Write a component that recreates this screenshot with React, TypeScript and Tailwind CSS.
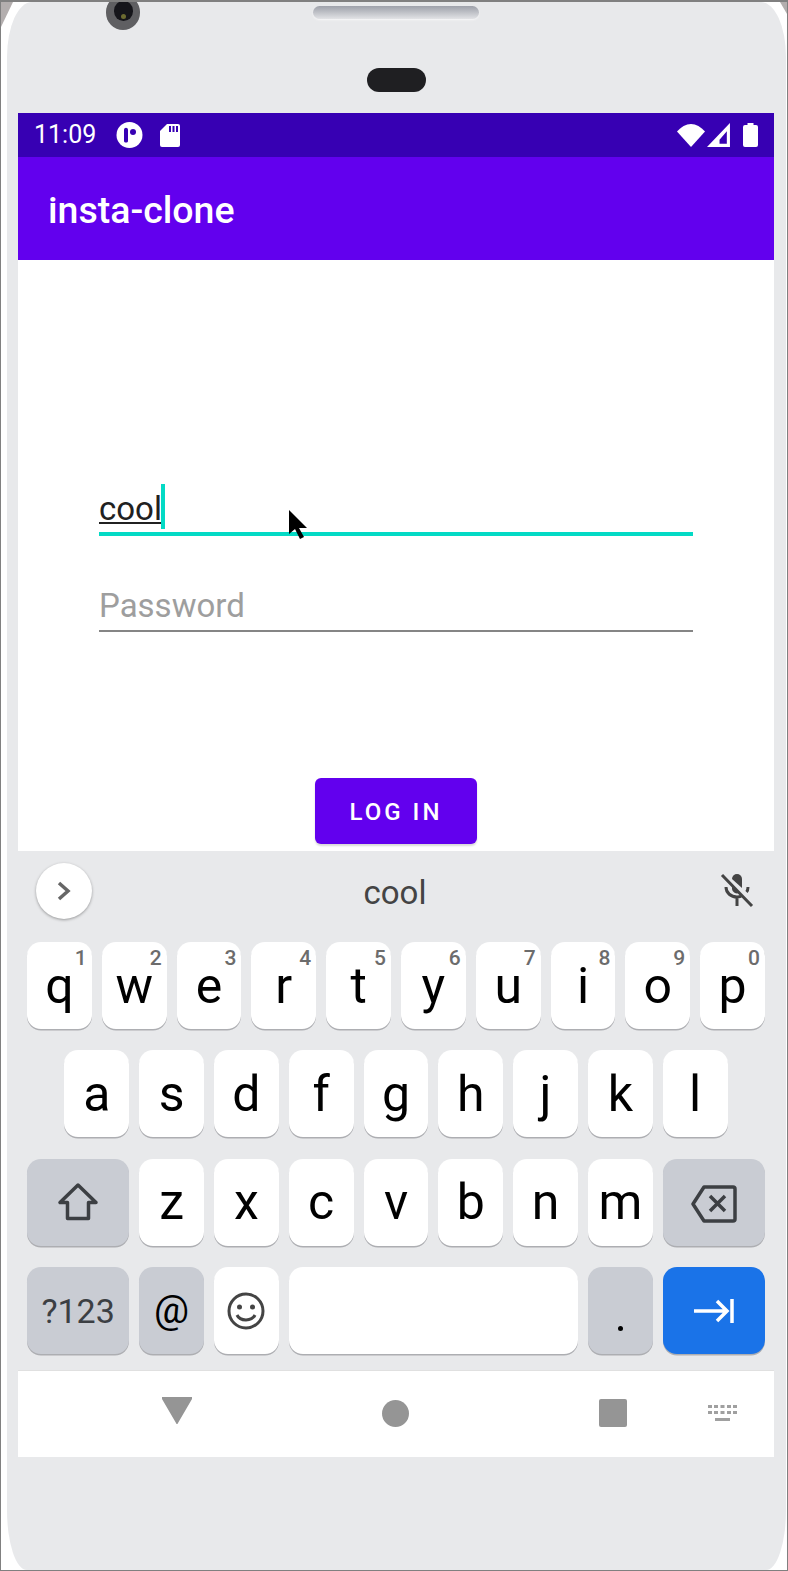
import React from 'react';

const rowOne = [
  ['q', '1'],
  ['w', '2'],
  ['e', '3'],
  ['r', '4'],
  ['t', '5'],
  ['y', '6'],
  ['u', '7'],
  ['i', '8'],
  ['o', '9'],
  ['p', '0'],
];
const rowTwo = ['a', 's', 'd', 'f', 'g', 'h', 'j', 'k', 'l'];
const rowThree = ['z', 'x', 'c', 'v', 'b', 'n', 'm'];

function Key({
  span = 'col-span-2',
  tone = 'bg-white',
  children,
}: {
  span?: string;
  tone?: string;
  children?: React.ReactNode;
}) {
  return (
    <div className={`${span} px-[5px]`}>
      <div
        className={`${tone} relative h-[87px] rounded-[14px] shadow-[0_1.5px_0_#adaeb2] flex items-center justify-center text-[50px] leading-none text-black`}
      >
        {children}
      </div>
    </div>
  );
}

export default function App() {
  return (
    <div
      className="relative w-[788px] h-[1571px] bg-white border-x border-t-2 border-b border-[#808080] overflow-hidden"
      style={{ fontFamily: 'Roboto, sans-serif' }}
    >
      <div className="h-full ml-[6px] mr-[1px] rounded-[25px_25px_20px_20px/55px_55px_60px_60px] bg-[#e8e9eb] pt-[111px] pl-[11px] pr-[12px]">
        <div className="flex h-[44px] items-center bg-[#3700b3] pl-[16px] pr-[16px] text-white">
          <span className="text-[25px]">11:09</span>
          <svg className="ml-[20px]" width="27" height="26" viewBox="0 0 27 26">
            <ellipse cx="13.500" cy="13" rx="13" ry="13" fill="#fff" />
            <path d="M8 8c0-3 4-3 4 0v11c0 2-4 2-4 0z" fill="#3700b3" />
            <circle cx="17" cy="10" r="3" fill="#3700b3" />
          </svg>
          <svg className="ml-[17px]" width="20" height="24" viewBox="0 0 20 24">
            <path d="M7 1h11a2 2 0 0 1 2 2v19a2 2 0 0 1-2 2H2a2 2 0 0 1-2-2V8z" fill="#fff" />
            <path d="M9 3h2v6H9zM12.500 3h2v6h-2zM16 3h2v6h-2z" fill="#3700b3" />
          </svg>
          <div className="ml-auto flex items-center">
            <svg width="28" height="23" viewBox="0 0 28 23">
              <path d="M0 7.500C4 3 9 0 14 0s10 3 14 7.500L14 23z" fill="#fff" />
            </svg>
            <svg className="ml-[2px]" width="24" height="24" viewBox="0 0 23 23">
              <path fillRule="evenodd" d="M22 0v23H0zM19 8l-7 8v4h7z" fill="#fff" />
            </svg>
            <svg className="ml-[12px]" width="15" height="24" viewBox="0 0 15 24">
              <path d="M4.500 0h6v2H13a2 2 0 0 1 2 2v18a2 2 0 0 1-2 2H2a2 2 0 0 1-2-2V4a2 2 0 0 1 2-2h2.500z" fill="#fff" />
            </svg>
          </div>
        </div>
        <div className="flex h-[103px] items-center bg-[#6200ee] pl-[30px] pt-[3px]">
          <span className="text-[37.5px] font-medium text-white">insta-clone</span>
        </div>

        <div className="h-[591px] bg-white px-[81px] pt-[218px]">
          <div className="relative h-[58px] border-b-[4px] border-[#03dac5]">
            <span className="text-[33px] leading-[62px] text-[#212121] underline decoration-[1.5px] underline-offset-[2px]">cool</span>
            <span className="absolute left-[62px] top-[6px] h-[45px] w-[4px] bg-[#03dac5]" />
          </div>
          <div className="mt-[37px] h-[59px] border-b-[2px] border-[#858585] text-[33px] leading-[66px] text-[#9e9e9e]">
            Password
          </div>
          <div className="mt-[146px] flex justify-center">
            <button className="h-[66px] w-[162px] rounded-[6px] bg-[#6200ee] pt-[2px] text-[24px] font-medium tracking-[3px] text-white shadow-[0_2px_2px_rgba(0,0,0,0.15)]">
              LOG IN
            </button>
          </div>
        </div>

        <div className="h-[520px] bg-[#e8e9eb] px-[4px] border-b border-[#e0e0e0]">
          <div className="grid h-[91px] grid-cols-[1fr_auto_1fr] items-start pl-[14px] pr-[16px] pt-[12px]">
            <div className="flex h-[56px] w-[56px] items-center justify-center rounded-full bg-white shadow-[0_1px_3px_rgba(0,0,0,0.35)]">
              <svg width="16" height="22" viewBox="0 0 16 22" fill="none">
                <path d="M3 3l9 8-9 8" stroke="#666" strokeWidth="3.500" />
              </svg>
            </div>
            <span className="text-[33px] leading-[60px] text-[#444]">cool</span>
            <svg className="justify-self-end mt-[9px]" width="34" height="36" viewBox="0 0 34 36" fill="none">
              <path d="M17 2a5 5 0 0 1 5 5v9l-10-9a5 5 0 0 1 5-5z" fill="#444" />
              <path d="M12 13v4a5 5 0 0 0 7 4z" fill="#444" />
              <path d="M6 15c0 6 5 10 11 10 2 0 4-.5 5-1.500M28 15c0 2-.5 4-1.500 5M17 25v9M2 3l30 31" stroke="#444" strokeWidth="3" />
            </svg>
          </div>
          <div className="grid grid-cols-[repeat(20,1fr)] gap-y-[21.4px]">
            {rowOne.map(([letter, num]) => (
              <Key key={letter}>
                {letter}
                <span className="absolute right-[5px] top-[6px] text-[21px] font-medium leading-none text-[#6c6c6c]">{num}</span>
              </Key>
            ))}
            <div />
            {rowTwo.map(letter => (
              <Key key={letter}>{letter}</Key>
            ))}
            <div />
            <Key span="col-span-3" tone="bg-[#c9ccd3]">
              <svg width="42" height="40" viewBox="0 0 42 40" fill="none">
                <path d="M21 3L3 20.500h7.500v16h21v-16H39z" stroke="#3c3f43" strokeWidth="3.500" strokeLinejoin="round" />
              </svg>
            </Key>
            {rowThree.map(letter => (
              <Key key={letter}>{letter}</Key>
            ))}
            <Key span="col-span-3" tone="bg-[#c9ccd3]">
              <svg className="mt-[3px]" width="46" height="38" viewBox="0 0 46 38" fill="none">
                <path d="M13 2h29a2 2 0 0 1 2 2v30a2 2 0 0 1-2 2H13L2 19z" stroke="#3c3f43" strokeWidth="3.500" strokeLinejoin="round" />
                <path d="M19 11l15 15M34 11L19 26" stroke="#3c3f43" strokeWidth="3.500" />
              </svg>
            </Key>
            <Key span="col-span-3" tone="bg-[#c9ccd3]">
              <span className="text-[34px] text-[#3c3f43]">?123</span>
            </Key>
            <Key tone="bg-[#c9ccd3]">
              <span className="text-[39px]">@</span>
            </Key>
            <Key>
              <svg width="38" height="38" viewBox="0 0 38 38" fill="none">
                <circle cx="19" cy="19" r="17" stroke="#444" strokeWidth="3" />
                <circle cx="12.500" cy="15" r="2.500" fill="#444" />
                <circle cx="25.500" cy="15" r="2.500" fill="#444" />
                <path d="M10 23c3 6.500 15 6.500 18 0" stroke="#444" strokeWidth="3" />
              </svg>
            </Key>
            <Key span="col-span-8" />
            <Key tone="bg-[#c9ccd3]">
              <span className="mt-[36px] block h-[5px] w-[5px] rounded-full bg-black" />
            </Key>
            <Key span="col-span-3" tone="bg-[#1a73e8]">
              <svg width="40" height="24" viewBox="0 0 40 24" fill="none">
                <path d="M0 12h33M23 2l10 10-10 10M38 0v24" stroke="#fff" strokeWidth="3.500" />
              </svg>
            </Key>
          </div>
        </div>

        <div className="flex h-[86px] items-center bg-white pb-[2px]">
          <div className="ml-[144px] -mt-[5px] w-[30px]">
            <svg width="30" height="27" viewBox="0 0 30 27">
              <path d="M1 0h28a1 1 0 0 1 1 2L16 26a1 1 0 0 1-2 0L0 2a1 1 0 0 1 1-2z" fill="#959595" />
            </svg>
          </div>
          <div className="ml-[190px] h-[27px] w-[27px] rounded-full bg-[#959595]" />
          <div className="ml-[190px] h-[28px] w-[28px] rounded-[2px] bg-[#959595]" />
          <svg className="ml-[81px]" width="29" height="16" viewBox="0 0 29 16">
            <path d="M0 0h4v3H0zM6 0h4v3H6zM12.500 0h4v3h-4zM19 0h4v3h-4zM25 0h4v3h-4zM0 6h4v3H0zM6 6h4v3H6zM12.500 6h4v3h-4zM19 6h4v3h-4zM25 6h4v3h-4zM7 13h15v3H7z" fill="#a0a0a0" />
          </svg>
        </div>
      </div>

      <svg className="absolute left-0 top-0" width="13" height="26" viewBox="0 0 13 26">
        <path d="M0 0h12L0 25z" fill="#b3aeae" />
      </svg>
      <svg className="absolute right-0 top-0" width="7" height="13" viewBox="0 0 7 13">
        <path d="M0 0h7v12z" fill="#b3aeae" />
      </svg>
      <div className="absolute left-[105px] top-0 h-[28px] w-[35px] overflow-hidden">
        <div className="absolute left-0 top-[-7px] h-[35px] w-[34px] rounded-full bg-[#5f5f62]" />
        <div className="absolute left-[8px] top-[-1px] h-[20px] w-[19px] rounded-full bg-[#15151a]" />
        <div className="absolute left-[15px] top-[12px] h-[5px] w-[5px] rounded-full bg-[#6b6a30]" />
      </div>
      <div className="absolute left-[312px] top-[4px] h-[13px] w-[166px] rounded-[7px] bg-gradient-to-b from-[#9ea1aa] to-[#e2e3e6] shadow-[0_1px_2px_#f7f7f8]" />
      <div className="absolute left-[366px] top-[66px] h-[24px] w-[59px] rounded-[12px] bg-[#1f1f22]" />
      <svg className="absolute left-[288px] top-[508px]" width="20" height="32" viewBox="0 0 20 32">
        <path d="M0 0v24l6-5 5 10 4-2-5-9h8z" fill="#000" />
      </svg>
    </div>
  );
}
